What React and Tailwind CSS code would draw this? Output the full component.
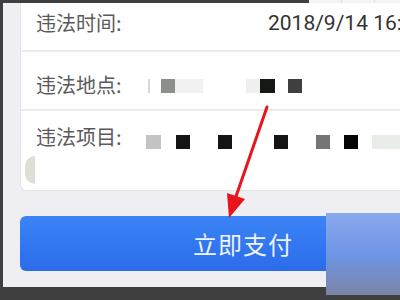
import React from 'react';

const font = { fontFamily: '"Noto Sans CJK SC", "Noto Sans", sans-serif' };

function Mosaic({ blocks, width = 260, height = 16 }) {
  // censored area in the screenshot, drawn as pixel blocks
  return (
    <svg width={width} height={height} viewBox={`0 0 ${width} ${height}`} className="block">
      {blocks.map(([x, w, c], i) => (
        <rect key={i} x={x} y={1} width={w} height={14} fill={c} />
      ))}
    </svg>
  );
}

export default function App() {
  return (
    <div className="relative w-[400px] h-[300px] overflow-hidden bg-[#3f3f3f] flex flex-col" style={font}>
      <div className="flex h-[3px] shrink-0">
        <div className="w-[309px] bg-[#3f3f3f]" />
        <div className="flex-1 bg-[#f4f4f4] flex">
          <div className="w-[33px] border-r border-[#dcdcdc]" />
          <div className="w-[33px] border-r border-[#dcdcdc]" />
        </div>
      </div>

      <div className="ml-[3px] h-[284px] bg-[#eeeef3] pl-[17px] flex flex-col">
        <div className="w-[446px] h-[188px] bg-white border-l border-b border-[#e3e3e6] rounded-bl-md flex flex-col">
          <div className="h-[49px] pt-[7px] pl-[15px] flex border-b-2 border-[#ececec]">
            <span className="w-[232px] shrink-0 text-[20px] leading-[26px] text-[#5a5a5a]">违法时间:</span>
            <span className="text-[21px] leading-[26px] text-[#333] whitespace-nowrap" style={{ fontFamily: 'Roboto, "Noto Sans", sans-serif' }}>
              2018/9/14 16:
            </span>
          </div>

          <div className="h-[59px] pt-[20px] pl-[15px] flex border-b-2 border-[#ececec]">
            <span className="w-[110px] shrink-0 text-[20px] leading-[26px] text-[#5a5a5a]">违法地点:</span>
            <div className="pt-[6px]">
              <Mosaic
                blocks={[
                  [2, 2, '#d8d8d8'],
                  [15, 14, '#8d8f8c'],
                  [29, 28, '#f1f1f1'],
                  [100, 14, '#efefef'],
                  [114, 15, '#151815'],
                  [142, 14, '#3f3f3f'],
                ]}
              />
            </div>
          </div>

          <div className="relative flex-1 pt-[13px] pl-[15px] flex">
            <span className="w-[110px] shrink-0 text-[20px] leading-[26px] text-[#5a5a5a]">违法项目:</span>
            <div className="pt-[10px]">
              <Mosaic
                blocks={[
                  [0, 15, '#c4c4c4'],
                  [30, 14, '#141414'],
                  [72, 14, '#151515'],
                  [128, 14, '#141414'],
                  [170, 14, '#757575'],
                  [198, 14, '#050505'],
                  [226, 34, '#e9ede8'],
                ]}
              />
            </div>
            <div className="absolute left-[4px] top-[45px] w-[10px] h-[28px] rounded-l-full bg-[#dedfd9]" />
          </div>
        </div>

        <button className="mt-[25px] w-[446px] h-[55px] rounded-md bg-gradient-to-b from-[#3b84f5] to-[#2b6beb] text-[#eef3fd] text-[24px] tracking-[1px]">
          立即支付
        </button>
      </div>

      <div className="absolute left-[326px] top-[213px] w-[74px] h-[82px] bg-gradient-to-b from-[#8ba9ec] via-[#6e95e6] to-[#7a84a6]" />

      <svg className="absolute inset-0 pointer-events-none" width="400" height="300" viewBox="0 0 400 300">
        <line x1="267" y1="107" x2="232" y2="208" stroke="#e8151d" strokeWidth="3" strokeLinecap="round" />
        <polygon points="229,218 227,193 245,199" fill="#e8151d" />
      </svg>
    </div>
  );
}
